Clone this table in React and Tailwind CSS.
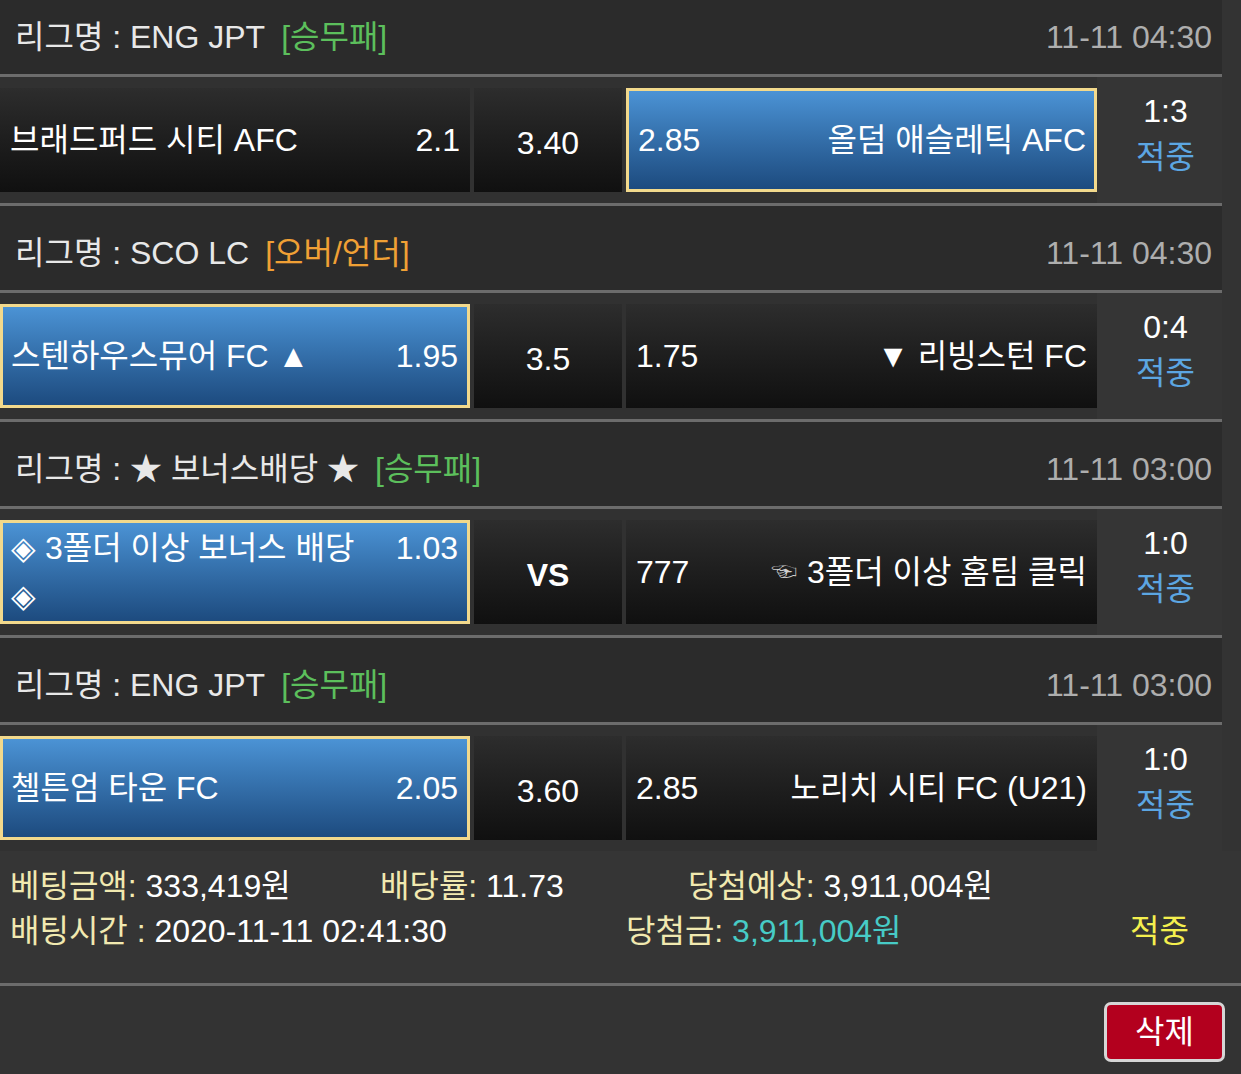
import React from "react";

const FONT = { fontFamily: '"Liberation Sans", "Noto Sans CJK KR", sans-serif' };

const matches = [
  {
    league: "리그명 : ENG JPT",
    type: "[승무패]",
    typeColor: "text-[#5cbf5c]",
    date: "11-11 04:30",
    home: "브래드퍼드 시티 AFC",
    homeOdds: "2.1",
    draw: "3.40",
    awayOdds: "2.85",
    away: "올덤 애슬레틱 AFC",
    sel: "away",
    score: "1:3",
    first: true,
  },
  {
    league: "리그명 : SCO LC",
    type: "[오버/언더]",
    typeColor: "text-[#f0a035]",
    date: "11-11 04:30",
    home: "스텐하우스뮤어 FC ▲",
    homeOdds: "1.95",
    draw: "3.5",
    awayOdds: "1.75",
    away: "▼ 리빙스턴 FC",
    sel: "home",
    score: "0:4",
  },
  {
    league: "리그명 : ★ 보너스배당 ★",
    type: "[승무패]",
    typeColor: "text-[#5cbf5c]",
    date: "11-11 03:00",
    home: (
      <>
        ◈ 3폴더 이상 보너스 배당
        <br />◈
      </>
    ),
    homeOdds: "1.03",
    draw: "VS",
    bold: true,
    awayOdds: "777",
    away: (
      <>
        <span className="mr-[10px] align-[2px] text-[26px] text-[#d0d0d0]">☜</span>3폴더 이상 홈팀 클릭
      </>
    ),
    sel: "home",
    score: "1:0",
    multi: true,
  },
  {
    league: "리그명 : ENG JPT",
    type: "[승무패]",
    typeColor: "text-[#5cbf5c]",
    date: "11-11 03:00",
    home: "첼튼엄 타운 FC",
    homeOdds: "2.05",
    draw: "3.60",
    awayOdds: "2.85",
    away: "노리치 시티 FC (U21)",
    sel: "home",
    score: "1:0",
  },
];

const darkBox = "bg-gradient-to-b from-[#2d2d2d] to-[#101010]";
const blueBox =
  "bg-gradient-to-b from-[#4b93d5] to-[#1d4b7f] border-[3px] border-[#f2d98c]";

function Sep() {
  return <div className="h-[3px] bg-[#6c6c6c]" />;
}

function Header({ m }) {
  return (
    <div
      className={`flex items-center justify-between bg-[#2b2b2b] pl-[15px] pr-[10px] ${
        m.first ? "h-[74px]" : "h-[84px] pt-[9px]"
      }`}
    >
      <div className="flex items-center text-[32px] leading-none text-[#e8e8e8]">
        <span>{m.league}</span>
        <span className={`ml-[16px] ${m.typeColor}`}>{m.type}</span>
      </div>
      <div className="text-[32px] leading-none text-[#aeaeae]">{m.date}</div>
    </div>
  );
}

function Row({ m }) {
  const homeSel = m.sel === "home";
  const awaySel = m.sel === "away";
  return (
    <div className="flex h-[126px] items-center bg-[#313131]">
      <div
        className={`flex h-[104px] w-[470px] justify-between text-[32px] text-white ${
          m.multi ? "items-start pt-[1px]" : "items-center"
        } ${homeSel ? blueBox + " pl-[8px] pr-[9px]" : darkBox + " pl-[10px] pr-[10px]"}`}
      >
        <span className="leading-[48px]">{m.home}</span>
        <span className="leading-[48px]">{m.homeOdds}</span>
      </div>
      <div
        className={`ml-[4px] flex h-[104px] w-[148px] items-center justify-center pt-[6px] text-[32px] text-white ${darkBox} ${
          m.bold ? "font-bold" : ""
        }`}
      >
        {m.draw}
      </div>
      <div
        className={`ml-[4px] flex h-[104px] w-[471px] items-center justify-between text-[32px] text-white ${
          awaySel ? blueBox + " pl-[9px] pr-[8px]" : darkBox + " pl-[10px] pr-[10px]"
        }`}
      >
        <span>{m.awayOdds}</span>
        <span>{m.away}</span>
      </div>
      <div className="flex h-full w-[125px] flex-col items-center justify-center bg-[#353535] pb-[13px] pl-[12px] text-[32px] leading-[46px]">
        <span className="text-white">{m.score}</span>
        <span className="text-[#5ca6e2]">적중</span>
      </div>
    </div>
  );
}

export default function App() {
  return (
    <div className="min-h-[1074px] w-[1241px] bg-[#333333]" style={FONT}>
      <div className="w-[1222px]">
        {matches.map((m, i) => (
          <React.Fragment key={i}>
            <Header m={m} />
            <Sep />
            <Row m={m} />
            {i < matches.length - 1 && <Sep />}
          </React.Fragment>
        ))}
      </div>
      <div className="bg-[#353535] pl-[10px] pt-[13px] pb-[29px] text-[32px] leading-[45px]">
        <div className="flex">
          <span className="w-[370px]">
            <span className="text-[#f1e9b0]">베팅금액: </span>
            <span className="text-white">333,419원</span>
          </span>
          <span className="w-[308px]">
            <span className="text-[#f1e9b0]">배당률: </span>
            <span className="text-white">11.73</span>
          </span>
          <span>
            <span className="text-[#f1e9b0]">당첨예상: </span>
            <span className="text-white">3,911,004원</span>
          </span>
        </div>
        <div className="flex">
          <span className="w-[616px]">
            <span className="text-[#f1e9b0]">배팅시간 : </span>
            <span className="text-white">2020-11-11 02:41:30</span>
          </span>
          <span className="w-[504px]">
            <span className="text-[#f1e9b0]">당첨금: </span>
            <span className="text-[#47cbc6]">3,911,004원</span>
          </span>
          <span className="text-[#f4ef4e]">적중</span>
        </div>
      </div>
      <div className="h-[3px] bg-[#6c6c6c]" />
      <div className="flex justify-end pr-[16px] pt-[16px]">
        <button className="flex h-[60px] w-[121px] items-center justify-center rounded-[7px] border-[3px] border-[#d6d6d6] bg-[#b3001e] text-[32px] leading-none text-white">
          삭제
        </button>
      </div>
    </div>
  );
}
